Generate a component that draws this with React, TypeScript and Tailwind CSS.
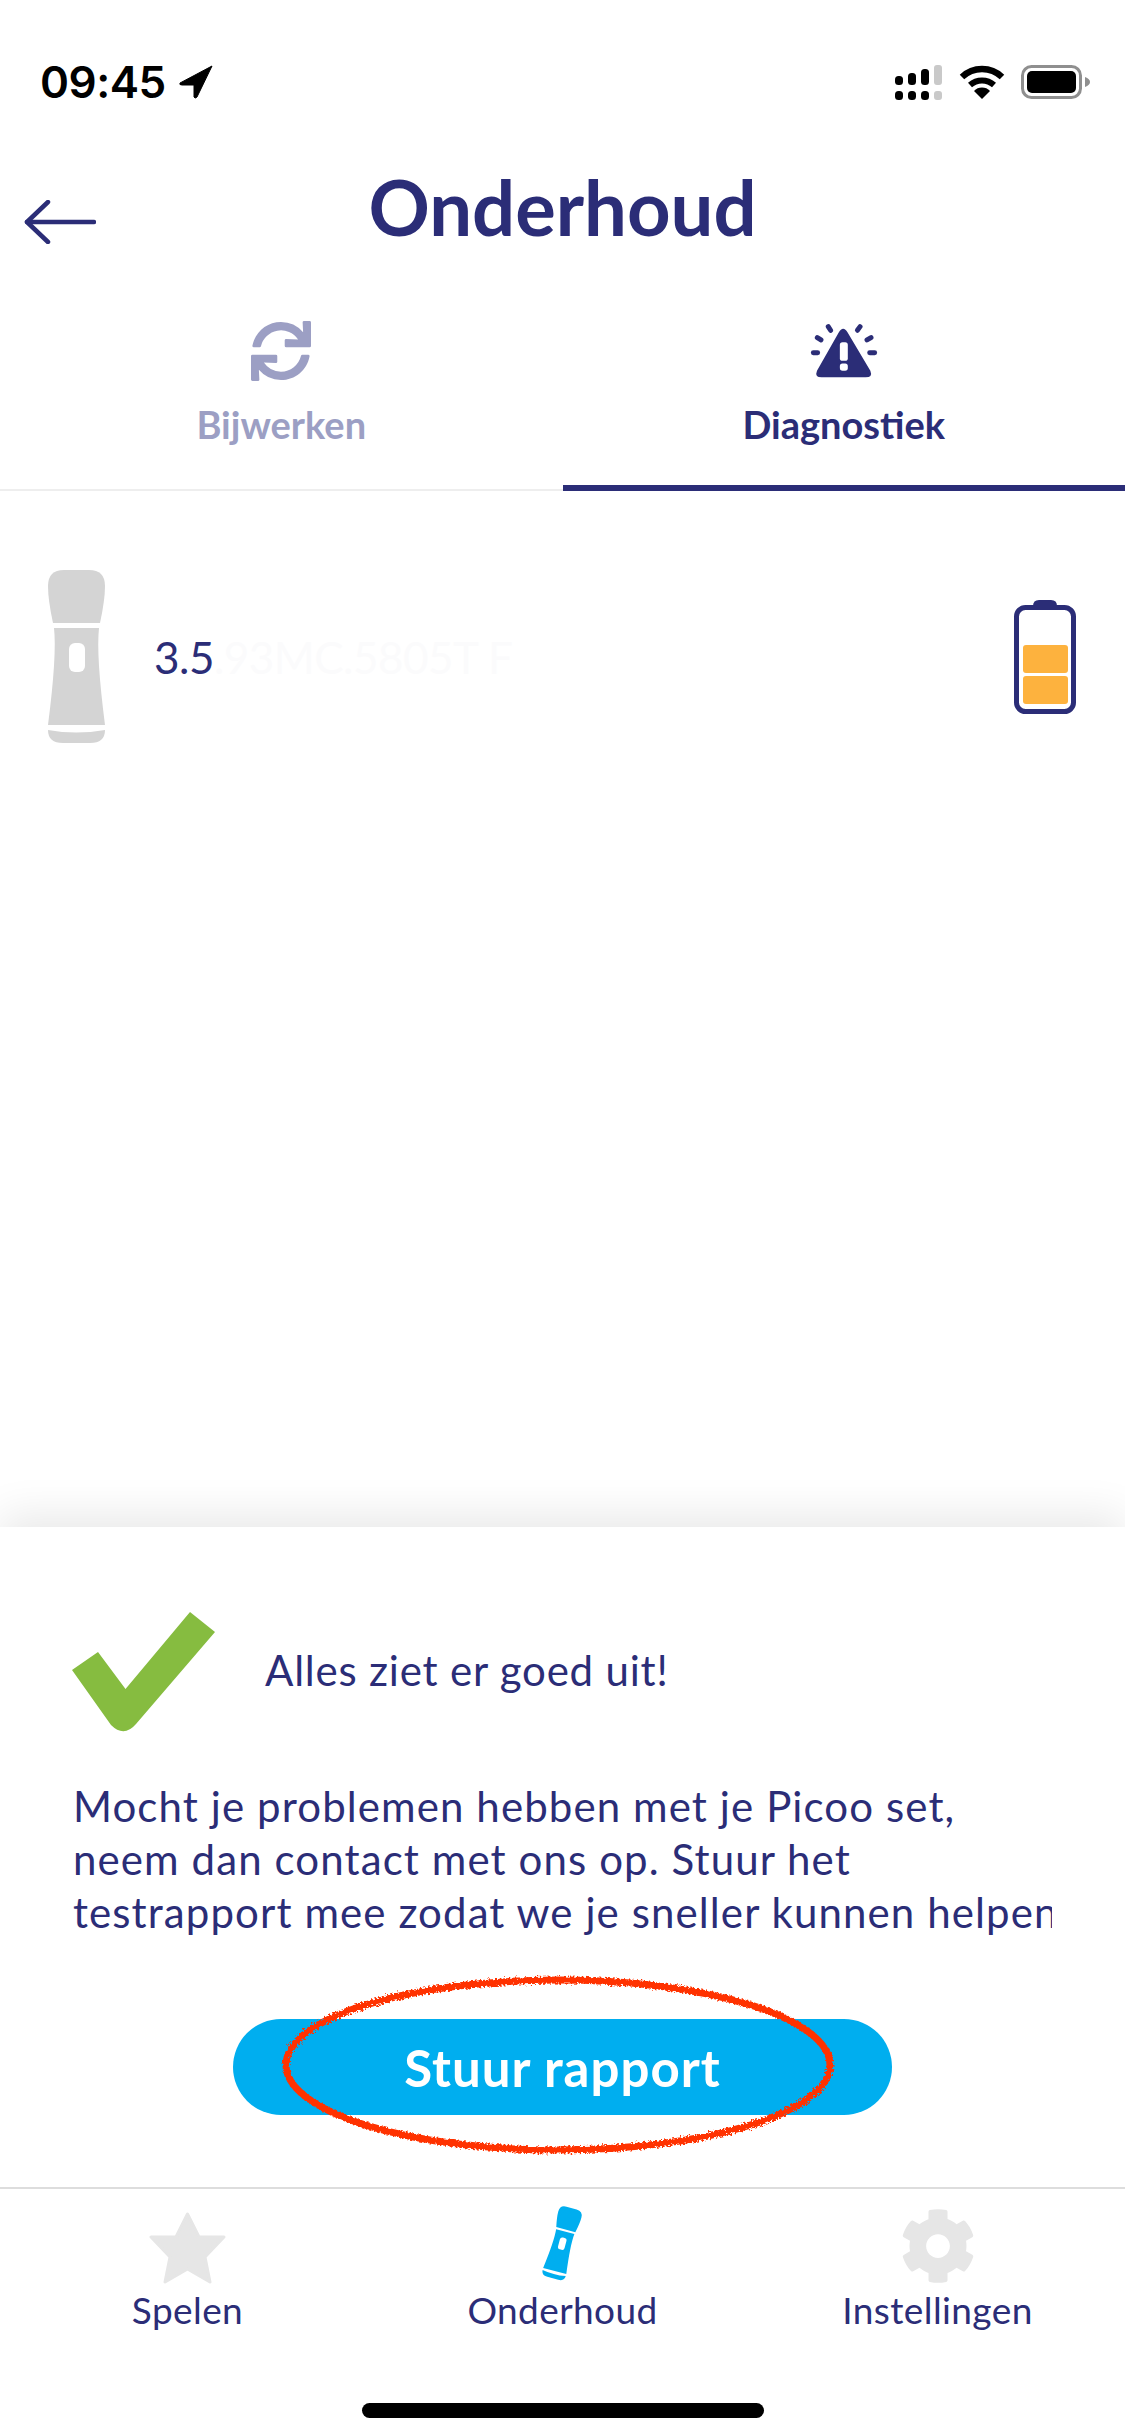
import React from 'react';
import { FaCog, FaSync } from 'react-icons/fa';

const navy = '#2b2d77';

const Flashlight: React.FC<{ color: string; hole?: string }> = ({ color, hole = '#ffffff' }) => (
    <g fill={color}>
        <path d="M0 16 Q0 0 16 0 H41 Q57 0 57 16 Q57 30 52 53 H5 Q0 30 0 16Z" />
        <path d="M6 58 H51 Q48 85 57 155 H0 Q9 85 6 58Z" />
        <path d="M0 160 Q28 165 57 160 Q57 173 42 173 H15 Q0 173 0 160Z" />
        <rect x="21" y="73" width="16" height="29" rx="6" fill={hole} />
    </g>
);

const StatusBar = () => (
    <div className="flex items-center justify-between h-[40px] mt-[62px] pl-[40px] pr-[34px]">
        <div className="flex items-center gap-[13px]">
            <span className="font-['Inter',sans-serif] font-semibold text-[44px] leading-none text-black tracking-[-0.5px]">09:45</span>
            <svg width="34" height="34" viewBox="0 0 34 34">
                <path d="M33 1 L1 18 Q0 20 3 20 L15 20 L15 32 Q16 34 18 32Z" fill="#000" stroke="#000" strokeWidth="1" strokeLinejoin="round" />
            </svg>
        </div>
        <div className="flex items-center gap-[16px]">
            <svg width="48" height="36" viewBox="0 0 48 36">
                <rect x="0" y="12" width="8" height="9" rx="3.5" fill="#000" />
                <rect x="13" y="9" width="8" height="12" rx="3.5" fill="#000" />
                <rect x="26" y="5" width="8" height="16" rx="3.5" fill="#000" />
                <rect x="39" y="1" width="8" height="20" rx="3" fill="#c9c9c9" />
                <rect x="0" y="27" width="8" height="9" rx="3.5" fill="#000" />
                <rect x="13" y="27" width="8" height="9" rx="3.5" fill="#000" />
                <rect x="26" y="27" width="8" height="9" rx="3.5" fill="#000" />
                <rect x="39" y="27" width="8" height="9" rx="3" fill="#c9c9c9" />
            </svg>
            <svg width="46" height="34" viewBox="0 0 46 34" fill="none">
                <path d="M3 12 A29 29 0 0 1 43 12" stroke="#000" strokeWidth="6.5" />
                <path d="M11 20 A18 18 0 0 1 35 20" stroke="#000" strokeWidth="6" />
                <path d="M15 26 A11 11 0 0 1 31 26 L23 34Z" fill="#000" />
            </svg>
            <svg width="70" height="34" viewBox="0 0 70 34">
                <rect x="1.5" y="1.5" width="58" height="31" rx="9" fill="none" stroke="#8f8f8f" strokeWidth="3" />
                <rect x="6" y="6" width="49" height="22" rx="5" fill="#000" />
                <path d="M64 12 Q69 14 69 17 Q69 20 64 22Z" fill="#8f8f8f" />
            </svg>
        </div>
    </div>
);

const AlertIcon = () => (
    <svg width="68" height="58" viewBox="90 65 205 175">
        <path d="M190 85 Q197 85 203 96 L272 212 Q280 232 258 232 H125 Q103 232 111 212 L177 96 Q183 85 190 85Z" fill={navy} />
        <rect x="180" y="126" width="24" height="56" rx="8" fill="#fff" />
        <rect x="180" y="190" width="24" height="22" rx="8" fill="#fff" />
        <g stroke={navy} strokeWidth="15" strokeLinecap="round">
            <path d="M145 79 L152 90" />
            <path d="M241 79 L233 90" />
            <path d="M112 112 L123 119" />
            <path d="M274 112 L262 119" />
            <path d="M100 158 L113 158" />
            <path d="M270 158 L285 158" />
        </g>
    </svg>
);

const Tabs = () => (
    <div className="grid grid-cols-2 h-[170px]">
        <div className="flex flex-col items-center border-b-2 border-[#eeeeee]">
            <FaSync size={60} color="#9c9fc4" />
            <span className="mt-[19px] font-['Lato',sans-serif] font-bold text-[38px] leading-[48px] text-[#9c9fc4]">Bijwerken</span>
        </div>
        <div className="flex flex-col items-center border-b-[6px] border-[#2b2d77]">
            <div className="h-[60px] flex items-center"><AlertIcon /></div>
            <span className="mt-[19px] font-['Lato',sans-serif] font-bold text-[38px] leading-[48px] text-[#2b2d77]">Diagnostiek</span>
        </div>
    </div>
);

const DeviceRow = () => (
    <div className="flex items-center pl-[48px] pr-[49px] mt-[79px]">
        <svg width="57" height="173" viewBox="0 0 57 173"><Flashlight color="#d4d4d4" /></svg>
        <span className="ml-[49px] font-['Lato',sans-serif] text-[44px] tracking-[-0.5px] leading-none text-[#2b2d77]">
            3.5<span className="text-[#fbfbfc]">.93MC.5805T F</span>
        </span>
        <svg className="ml-auto" width="62" height="114" viewBox="0 0 62 114">
            <path d="M19 6 Q19 0 25 0 H37 Q43 0 43 6Z" fill={navy} />
            <rect x="2.5" y="7.5" width="57" height="104" rx="9" fill="#fff" stroke={navy} strokeWidth="5" />
            <rect x="9" y="45" width="45" height="28" rx="3" fill="#fdb23e" />
            <rect x="9" y="76" width="45" height="28" rx="3" fill="#fdb23e" />
        </svg>
    </div>
);

const Sheet = () => (
    <div className="h-[660px] shrink-0 bg-white shadow-[0_-12px_40px_rgba(0,0,0,0.09)] pt-[85px] relative">
        <div className="flex items-center pl-[72px]">
            <svg width="143" height="121" viewBox="0 0 143 121">
                <path d="M118 0 L143 20 L64 112 Q52 126 39 113 L0 58 L26 40 L53.5 77Z" fill="#86bc40" />
            </svg>
            <span className="ml-[50px] -mt-[6px] font-['Lato',sans-serif] text-[42px] tracking-[0.8px] leading-none text-[#2b2d77]">Alles ziet er goed uit!</span>
        </div>
        <div className="mt-[47px] ml-[73px] w-[979px] overflow-hidden whitespace-nowrap font-['Lato',sans-serif] text-[42px] tracking-[1.1px] leading-[53px] text-[#2b2d77]">
            <div>Mocht je problemen hebben met je Picoo set,</div>
            <div>neem dan contact met ons op. Stuur het</div>
            <div>testrapport mee zodat we je sneller kunnen helpen.</div>
        </div>
        <div className="relative mt-[80px] mx-auto w-[659px] h-[96px] rounded-full bg-[#00aeef] flex items-center justify-center">
            <span className="font-['Lato',sans-serif] font-bold text-[51px] tracking-[1px] leading-none text-white">Stuur rapport</span>
            <svg className="absolute left-[40px] -top-[51px]" width="570" height="196" viewBox="0 0 570 196" fill="none">
                <defs>
                    <filter id="rough" x="-5%" y="-10%" width="110%" height="120%">
                        <feTurbulence type="fractalNoise" baseFrequency="0.45" numOctaves="2" seed="4" />
                        <feDisplacementMap in="SourceGraphic" scale="6" />
                    </filter>
                </defs>
                <ellipse cx="285" cy="97" rx="272" ry="85" stroke="#ff3300" strokeWidth="7" filter="url(#rough)" />
            </svg>
        </div>
    </div>
);

const NavItem: React.FC<{ label: string; children: React.ReactNode }> = ({ label, children }) => (
    <div className="flex flex-col items-center w-[375px]">
        <div className="h-[76px] flex items-end justify-center">{children}</div>
        <span className="mt-[4px] font-['Lato',sans-serif] text-[37px] tracking-[0.4px] leading-[44px] text-[#2b2d77]">{label}</span>
    </div>
);

const BottomNav = () => (
    <div className="h-[249px] shrink-0 border-t-2 border-[#dddddd] flex flex-col items-center bg-white relative">
        <div className="flex pt-[19px]">
            <NavItem label="Spelen">
                <svg width="77" height="72" viewBox="0 0 77 72">
                    <path d="M38.5 2 L50 25 H75 L56 45 L61 70 L38.5 57 L16 70 L21 45 L2 25 H27Z" fill="#e6e6e6" stroke="#e6e6e6" strokeWidth="3" strokeLinejoin="round" />
                </svg>
            </NavItem>
            <NavItem label="Onderhoud">
                <svg className="overflow-visible" width="42" height="76" viewBox="0 0 42 76">
                    <g transform="translate(18 -3) rotate(15) scale(0.42)"><Flashlight color="#00aeef" /></g>
                </svg>
            </NavItem>
            <NavItem label="Instellingen">
                <FaCog size={76} color="#e6e6e6" />
            </NavItem>
        </div>
        <div className="mt-[71px] w-[402px] h-[15px] rounded-full bg-black" />
    </div>
);

export default function App() {
    return (
        <div className="w-[1125px] h-[2436px] bg-white flex flex-col overflow-hidden">
            <StatusBar />
            <div className="grid grid-cols-[1fr_auto_1fr] items-center mt-[67px] h-[72px]">
                <svg className="ml-[24px] mt-[30px]" width="72" height="44" viewBox="0 0 72 44" fill="none" stroke={navy} strokeWidth="4.5" strokeLinecap="round" strokeLinejoin="round">
                    <path d="M3 22 H70" />
                    <path d="M24 2 L3 22 L24 42" />
                </svg>
                <h1 className="font-['Lato',sans-serif] font-bold text-[76px] leading-none text-[#2b2d77]">Onderhoud</h1>
                <div />
            </div>
            <div className="mt-[80px]"><Tabs /></div>
            <DeviceRow />
            <div className="flex-1" />
            <Sheet />
            <BottomNav />
        </div>
    );
}
